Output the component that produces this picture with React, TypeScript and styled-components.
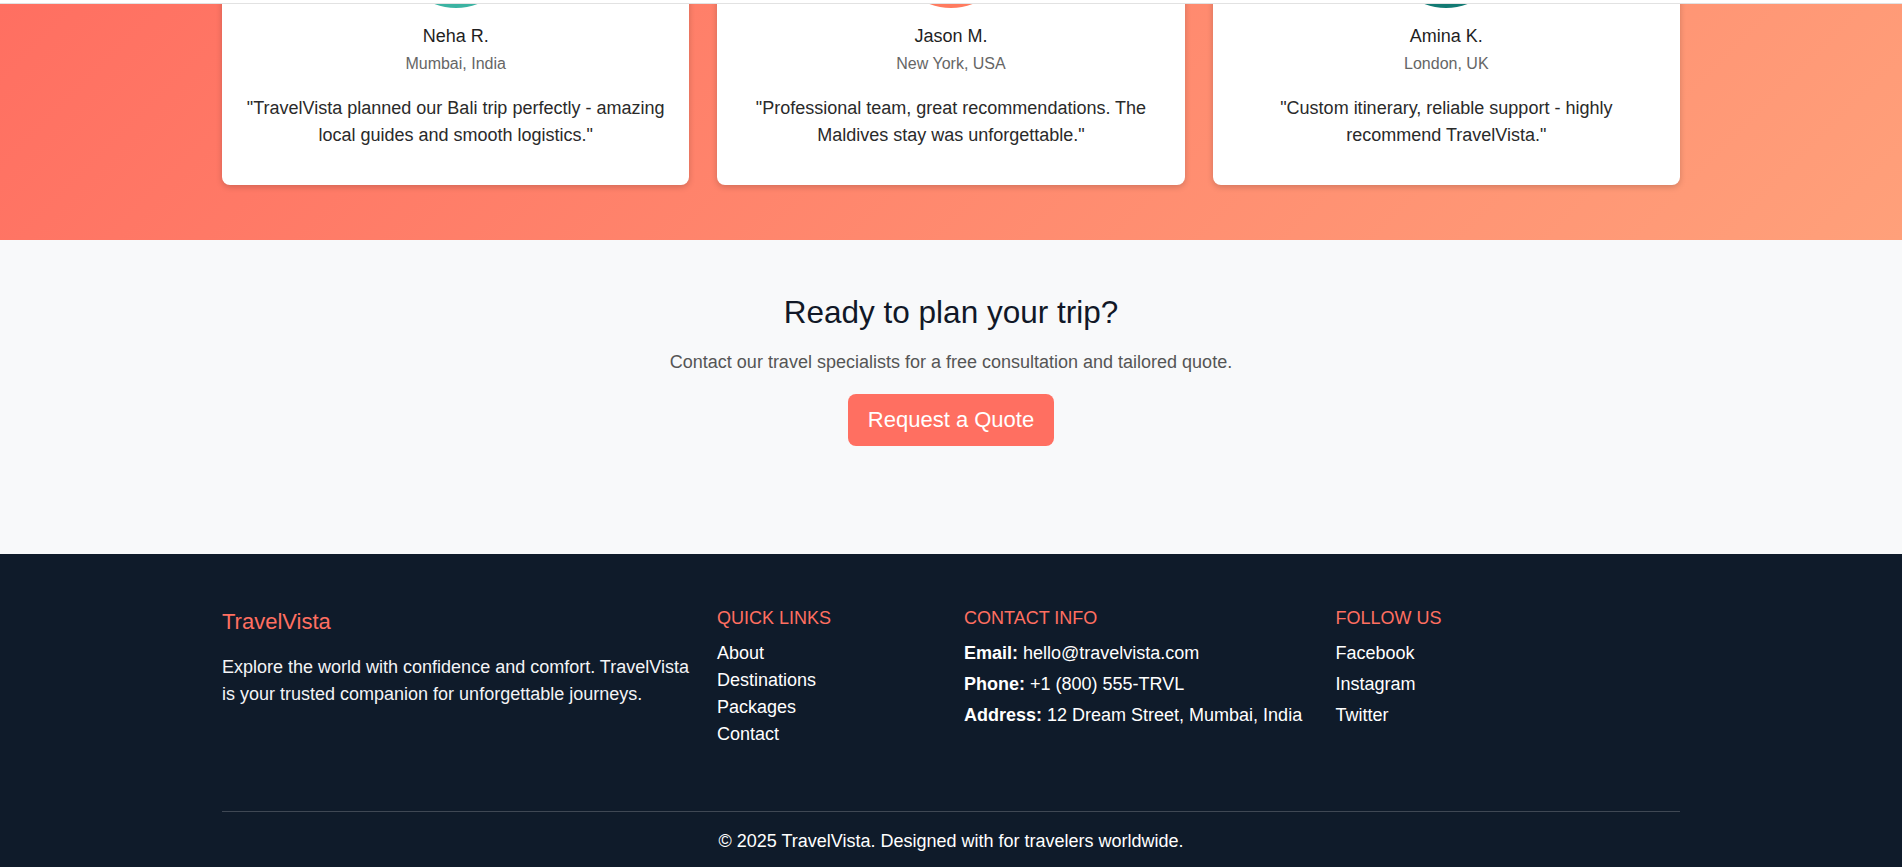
import React from "react";
import styled, { createGlobalStyle } from "styled-components";

const GlobalStyle = createGlobalStyle`
  html, body { margin: 0; padding: 0; }
  body {
    font-family: "Liberation Sans", Arial, Helvetica, sans-serif;
    background: #ffffff;
    color: #222222;
  }
  *, *::before, *::after { box-sizing: border-box; }
`;

const Page = styled.div`
  display: flex;
  flex-direction: column;
  min-height: 867px;
`;

const TopStrip = styled.div`
  height: 4px;
  background: #ffffff;
  border-bottom: 1px solid #e2e2e2;
`;

const Container = styled.div`
  width: 1458px;
  margin: 0 auto;
`;

const Testimonials = styled.section`
  background: linear-gradient(135deg, #ff6f61 0%, #ffa07a 100%);
  overflow: hidden;
  padding-bottom: 55px;
`;

const CardGrid = styled.div`
  display: grid;
  grid-template-columns: repeat(3, 1fr);
  gap: 28px;
  margin-top: -148px;
`;

const Card = styled.article`
  background: #ffffff;
  border-radius: 8px;
  box-shadow: 0 2px 6px rgba(0, 0, 0, 0.18);
  padding: 32px 24px 36px;
  text-align: center;
`;

const Avatar = styled.div<{ $color: string }>`
  width: 120px;
  height: 120px;
  border-radius: 50%;
  background: ${(p) => p.$color};
  margin: 0 auto 15px;
`;

const Name = styled.h3`
  margin: 0 0 1.5px;
  font-size: 18px;
  line-height: 27px;
  font-weight: 400;
  color: #1f1f1f;
`;

const Location = styled.div`
  font-size: 16px;
  line-height: 24px;
  color: #666666;
`;

const Quote = styled.p`
  margin: 19px 0 0;
  font-size: 18px;
  line-height: 27px;
  color: #2a2a2a;
`;

const Cta = styled.section`
  background: #f8f9fa;
  padding: 54.5px 0 108.5px;
  text-align: center;
`;

const CtaTitle = styled.h2`
  margin: 0 0 17px;
  font-size: 31.5px;
  line-height: 1.2;
  font-weight: 400;
  color: #111827;
`;

const CtaText = styled.p`
  margin: 0 0 18px;
  font-size: 18px;
  line-height: 27px;
  color: #555555;
`;

const QuoteButton = styled.button`
  font-family: inherit;
  font-size: 22px;
  line-height: 26px;
  padding: 13px 20px;
  border: none;
  border-radius: 8px;
  background: #ff6f61;
  color: #ffffff;
  cursor: pointer;
`;

const Footer = styled.footer`
  background: #0f1b2a;
  color: #ffffff;
  padding: 50.5px 0 14px;
  flex: 1;
`;

const FooterGrid = styled.div`
  display: grid;
  grid-template-columns: 467px 219px 343.5px 1fr;
  gap: 28px;
  align-items: start;
`;

const Column = styled.div`
  display: flex;
  flex-direction: column;
`;

const Brand = styled.h3`
  margin: 0 0 16px;
  font-size: 22px;
  line-height: 33px;
  font-weight: 400;
  color: #ff6f61;
`;

const About = styled.p`
  margin: 0;
  font-size: 18px;
  line-height: 27px;
  color: #f3f4f6;
`;

const ColTitle = styled.h4`
  margin: 0 0 8px;
  font-size: 18px;
  line-height: 27px;
  font-weight: 400;
  color: #ff6f61;
  text-transform: uppercase;
`;

const LinkList = styled.ul`
  list-style: none;
  margin: 0;
  padding: 0;
`;

const LinkItem = styled.li<{ $spaced?: boolean }>`
  font-size: 18px;
  line-height: 27px;
  margin-bottom: ${(p) => (p.$spaced ? "4.3px" : "0")};
  color: #ffffff;
`;

const FooterLink = styled.a`
  color: #ffffff;
  text-decoration: none;
`;

const Label = styled.strong`
  font-weight: 700;
`;

const FooterBottom = styled.div`
  margin-top: 63px;
  border-top: 1px solid rgba(255, 255, 255, 0.2);
  padding-top: 16px;
  text-align: center;
  font-size: 18px;
  line-height: 27px;
  color: #ffffff;
`;

const testimonials = [
  {
    name: "Neha R.",
    place: "Mumbai, India",
    color: "#3bb3a2",
    text: "\"TravelVista planned our Bali trip perfectly - amazing local guides and smooth logistics.\"",
  },
  {
    name: "Jason M.",
    place: "New York, USA",
    color: "#ff7b5f",
    text: "\"Professional team, great recommendations. The Maldives stay was unforgettable.\"",
  },
  {
    name: "Amina K.",
    place: "London, UK",
    color: "#127a73",
    text: "\"Custom itinerary, reliable support - highly recommend TravelVista.\"",
  },
];

export default function App() {
  return (
    <>
      <GlobalStyle />
      <Page>
        <TopStrip />
        <Testimonials>
          <Container>
            <CardGrid>
              {testimonials.map((t) => (
                <Card key={t.name}>
                  <Avatar $color={t.color} />
                  <Name>{t.name}</Name>
                  <Location>{t.place}</Location>
                  <Quote>{t.text}</Quote>
                </Card>
              ))}
            </CardGrid>
          </Container>
        </Testimonials>
        <Cta>
          <CtaTitle>Ready to plan your trip?</CtaTitle>
          <CtaText>Contact our travel specialists for a free consultation and tailored quote.</CtaText>
          <QuoteButton>Request a Quote</QuoteButton>
        </Cta>
        <Footer>
          <Container>
            <FooterGrid>
              <Column>
                <Brand>TravelVista</Brand>
                <About>
                  Explore the world with confidence and comfort. TravelVista is your trusted companion for
                  unforgettable journeys.
                </About>
              </Column>
              <Column>
                <ColTitle>Quick Links</ColTitle>
                <LinkList>
                  <LinkItem><FooterLink href="#">About</FooterLink></LinkItem>
                  <LinkItem><FooterLink href="#">Destinations</FooterLink></LinkItem>
                  <LinkItem><FooterLink href="#">Packages</FooterLink></LinkItem>
                  <LinkItem><FooterLink href="#">Contact</FooterLink></LinkItem>
                </LinkList>
              </Column>
              <Column>
                <ColTitle>Contact Info</ColTitle>
                <LinkList>
                  <LinkItem $spaced><Label>Email:</Label> hello@travelvista.com</LinkItem>
                  <LinkItem $spaced><Label>Phone:</Label> +1 (800) 555-TRVL</LinkItem>
                  <LinkItem $spaced><Label>Address:</Label> 12 Dream Street, Mumbai, India</LinkItem>
                </LinkList>
              </Column>
              <Column>
                <ColTitle>Follow Us</ColTitle>
                <LinkList>
                  <LinkItem $spaced><FooterLink href="#">Facebook</FooterLink></LinkItem>
                  <LinkItem $spaced><FooterLink href="#">Instagram</FooterLink></LinkItem>
                  <LinkItem $spaced><FooterLink href="#">Twitter</FooterLink></LinkItem>
                </LinkList>
              </Column>
            </FooterGrid>
            <FooterBottom>© 2025 TravelVista. Designed with for travelers worldwide.</FooterBottom>
          </Container>
        </Footer>
      </Page>
    </>
  );
}
